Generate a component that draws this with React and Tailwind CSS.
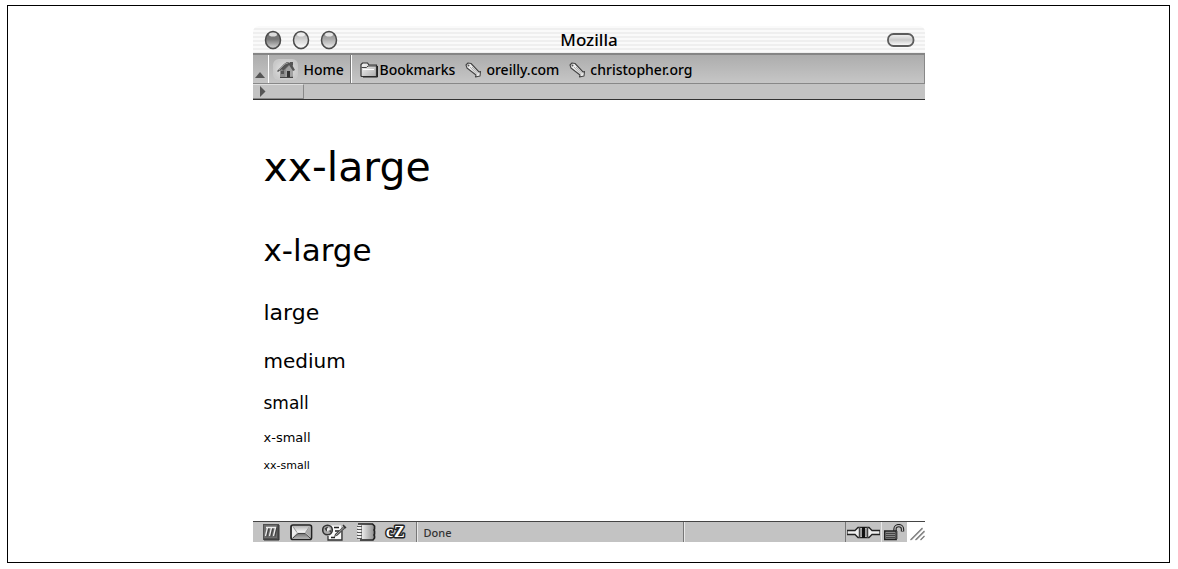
const samples = [
  { label: 'xx-large', style: 'text-[41px] leading-[48px]' },
  { label: 'x-large', style: 'text-[31px] leading-9' },
  { label: 'large', style: 'text-[22px] leading-7' },
  { label: 'medium', style: 'text-[20px] leading-6' },
  { label: 'small', style: 'text-[17px] leading-5' },
  { label: 'x-small', style: 'text-[13px] leading-4' },
  { label: 'xx-small', style: 'text-[11px] leading-[14px]' },
];

const windowButtons = [
  { label: 'Close', fill: 'url(#orbDark)' },
  { label: 'Minimize', fill: 'url(#orbLight)' },
  { label: 'Zoom', fill: 'url(#orbMid)' },
];

const HomeIcon = () => (
  <svg width="26" height="22" viewBox="0 0 26 22">
    <defs>
      <radialGradient id="homeGlow">
        <stop offset="0.5" stopColor="#d8d8d8" />
        <stop offset="1" stopColor="#c9c9c9" />
      </radialGradient>
    </defs>
    <rect x="0" y="0" width="25" height="21" rx="6" fill="url(#homeGlow)" />
    <path d="M7 10v8l5 1 8-1v-8l-5-5z" fill="#8a8a8a" />
    <path d="M13 10l4-4 3 5v6l-8 2z" fill="#a2a2a2" />
    <path d="M4 12l7-7 3-2 4 1 4 7-2 1-4-6-6 6-1-2-4 3z" fill="#555" />
    <path d="M6 11l6-6 3-1" stroke="#999" fill="none" />
    <path d="M17 3h3v4l-3-2z" fill="#555" />
    <path d="M14 12h3v6h-3z" fill="#333" />
    <path d="M8 12h3v3H8z" fill="#555" />
    <path d="M7 18.500h13" stroke="#444" />
  </svg>
);

const FolderIcon = () => (
  <svg width="19" height="16" viewBox="0 0 19 16">
    <defs>
      <linearGradient id="folder" x1="0" y1="0" x2="1" y2="1">
        <stop offset="0" stopColor="#fafafa" />
        <stop offset="1" stopColor="#a9a9a9" />
      </linearGradient>
    </defs>
    <path d="M1 14V2.500L2.500 1h5L9 3h7.500v11.500H1.500z" fill="url(#folder)" stroke="#333" strokeWidth="1.200" />
    <path d="M1.500 5.500h5l1.500-1.500h8" fill="none" stroke="#444" />
    <path d="M3 7.500h11" stroke="#fff" />
    <path d="M17.500 4v11H3" fill="none" stroke="#222" />
  </svg>
);

const TagIcon = () => (
  <svg width="17" height="16" viewBox="0 0 17 16">
    <path d="M1 3l2-2 3 .5 8 8.500 1.500-.5-.5 4.500-4.500 1 .5-2L2 6z" fill="#eee" stroke="#444" strokeWidth="1.100" strokeLinejoin="round" />
    <path d="M5 5l7 7.500M7 5l6 6.500" stroke="#aaa" fill="none" />
    <circle cx="3.500" cy="3.500" r="1" fill="#555" />
  </svg>
);

const NavigatorIcon = () => (
  <svg width="17" height="17" viewBox="0 0 17 17">
    <path d="M0 0h16v16H0z" fill="#505050" />
    <path d="M1 1h13v13H1z" fill="#6d6d6d" />
    <path d="M16 1v15H1" stroke="#333" fill="none" />
    <path d="M3.500 12.500L5.500 4M7.500 12.500L9.500 4M11.500 12.500L13.500 4" stroke="#444" strokeWidth="2" />
    <path d="M2.500 12L4.500 3.500M6.500 12L8.500 3.500M10.500 12L12.500 3.500M3 3.500h10" stroke="#eee" strokeWidth="1.300" fill="none" />
  </svg>
);

const MailIcon = () => (
  <svg width="23" height="17" viewBox="0 0 23 17">
    <defs>
      <linearGradient id="mailFlap" x1="0" y1="0" x2="0" y2="1">
        <stop offset="0" stopColor="#b5b5b5" />
        <stop offset="1" stopColor="#fafafa" />
      </linearGradient>
      <linearGradient id="mailBase" x1="0" y1="0" x2="0" y2="1">
        <stop offset="0" stopColor="#777" />
        <stop offset="1" stopColor="#b5b5b5" />
      </linearGradient>
    </defs>
    <rect x="1" y="1" width="20.500" height="14.500" rx="2" fill="#ccc" stroke="#222" strokeWidth="1.700" />
    <path d="M2 2.500l5 6-5 5z" fill="#eee" />
    <path d="M20.500 2.500l-5 6 5 5z" fill="#aaa" />
    <path d="M2.500 2h17.500l-5 6.500H7.500z" fill="url(#mailFlap)" />
    <path d="M2.500 14.500l5-4.500h7.500l5 4.500z" fill="url(#mailBase)" />
    <path d="M3 14l5-4.500h7l5 4.500" stroke="#444" fill="none" />
    <path d="M3 2.500l4 6M19.500 2.500l-4 6" stroke="#999" fill="none" />
  </svg>
);

const ComposerIcon = () => (
  <svg width="25" height="17" viewBox="0 0 25 17">
    <path d="M6 1.500h13v14H6z" fill="#fafafa" />
    <path d="M20 7v9H6v-4" fill="none" stroke="#333" strokeWidth="1.300" />
    <circle cx="5.500" cy="6" r="4.800" fill="#aaa" stroke="#333" strokeWidth="1.600" />
    <path d="M2.500 4.500l3-2 1 3-2 2zM7 7l2-1v3z" fill="#444" />
    <path d="M5 4.500l2-1 1 2-3 2z" fill="#eee" />
    <path d="M12 3.500h5M13 7h4M9 13.500h4" stroke="#222" strokeWidth="1.700" />
    <path d="M12 13l1-3 9-8 2 1.500-8.500 8z" fill="#444" />
    <path d="M13.500 11.500L22 3.500" stroke="#aaa" />
    <path d="M21 1l3 3" stroke="#333" strokeWidth="1.500" />
  </svg>
);

const AddressBookIcon = () => (
  <svg width="20" height="18" viewBox="0 0 20 18">
    <defs>
      <linearGradient id="book">
        <stop offset="0.2" stopColor="#f0f0f0" />
        <stop offset="1" stopColor="#929292" />
      </linearGradient>
    </defs>
    <path d="M1 1h14l2 2v12l-2 1.500H1z" fill="url(#book)" />
    <path d="M1 1h14.500l2 2v3l-.5 1 .5 1v3l-.5 1 .5 1v2L16 17H3" stroke="#222" fill="none" strokeWidth="1.700" />
    <path d="M4.500 2v14" stroke="#999" />
    <path d="M0 3.500h5M0 6.500h5M0 9.500h5M0 12.500h5M0 15.500h5" stroke="#555" />
    <path d="M0 4.500h4M0 7.500h4M0 10.500h4M0 13.500h4" stroke="#eee" />
  </svg>
);

const ChatIcon = () => (
  <svg width="26" height="20" viewBox="0 0 26 20" className="overflow-visible">
    <g fill="#fff" stroke="#222" strokeWidth="3" strokeLinejoin="round" paintOrder="stroke" fontFamily="Liberation Serif, serif" fontWeight="700">
      <text x="2" y="15" fontSize="16">c</text>
      <text x="10" y="15" fontSize="16">Z</text>
    </g>
  </svg>
);

const PlugIcon = () => (
  <svg width="33" height="13" viewBox="0 0 33 13">
    <path d="M0 4.500h8l3-3h11l3 3h8v4h-8l-3 3H11l-3-3H0z" fill="#eee" stroke="#222" strokeWidth="1.300" />
    <path d="M12 2h9v9h-9z" fill="#bbb" />
    <path d="M12.500 1v11M20.500 1v11" stroke="#444" strokeWidth="1.500" />
    <path d="M15 1h3v11h-3z" fill="#111" />
    <path d="M14 3v7M19 3v7" stroke="#888" />
  </svg>
);

const LockIcon = () => (
  <svg width="21" height="17" viewBox="0 0 21 17">
    <path d="M11 7V5c0-4.500 7.500-4.500 7.500 0v2.500" stroke="#222" strokeWidth="3.400" fill="none" />
    <path d="M11 7V5c0-4.500 7.500-4.500 7.500 0v2" stroke="#bbb" strokeWidth="1.200" fill="none" />
    <path d="M.7 7h11.500v8.500H.7z" fill="#888" stroke="#222" strokeWidth="1.400" />
    <path d="M2 9.500h9M2 11.500h9M2 13.500h9" stroke="#444" />
    <path d="M13 7v8" stroke="#555" />
  </svg>
);

const ResizeGrip = () => (
  <svg width="18" height="20" viewBox="0 0 18 20">
    <path d="M3.500 18L15.500 6M8.500 18l9-9M13.500 18l4-4" stroke="#777" strokeWidth="1.200" />
    <path d="M5 18L16 7M10 18l8-8" stroke="#ccc" strokeWidth=".8" />
  </svg>
);

const components = [
  { label: 'Navigator', icon: NavigatorIcon, style: 'w-[27px]' },
  { label: 'Mail', icon: MailIcon, style: 'w-8' },
  { label: 'Composer', icon: ComposerIcon, style: 'w-[35px]' },
  { label: 'Address Book', icon: AddressBookIcon, style: 'w-[27px]' },
  { label: 'Chat', icon: ChatIcon, style: 'w-8' },
];

const TitleBar = () => (
  <header className="grid grid-cols-[1fr_auto_1fr] items-center h-[29px] pl-[11px] pr-[10px] rounded-t-md border-b-2 border-[#858585] bg-[repeating-linear-gradient(to_bottom,#fafafa_0px,#fafafa_2px,#efefef_2px,#efefef_4px)]">
    <div className="flex gap-[10px]">
      {windowButtons.map(({ label, fill }) => (
        <button key={label} aria-label={label} className="block">
          <svg width="18" height="20" viewBox="0 0 18 20">
            <ellipse cx="9" cy="11" rx="8" ry="8.500" fill="#bbb" />
            <ellipse cx="9" cy="10" rx="7.500" ry="8.500" fill={fill} stroke="#4a4a4a" strokeWidth="1.500" />
            <ellipse cx="9" cy="4.500" rx="4" ry="2" fill="#fff" opacity=".75" />
          </svg>
        </button>
      ))}
    </div>
    <h1 className="text-[17px] leading-5">Mozilla</h1>
    <button aria-label="Toggle toolbar" className="justify-self-end">
      <svg width="28" height="14" viewBox="0 0 28 14">
        <defs>
          <linearGradient id="pill" x1="0" y1="0" x2="0" y2="1">
            <stop offset="0" stopColor="#f4f4f4" />
            <stop offset="0.5" stopColor="#ccc" />
            <stop offset="1" stopColor="#fff" />
          </linearGradient>
        </defs>
        <rect x="1" y="1" width="25.500" height="12" rx="5.500" fill="url(#pill)" stroke="#5c5c5c" strokeWidth="1.800" />
      </svg>
    </button>
  </header>
);

const Toolbar = () => (
  <nav className="flex h-[29px] text-[14px] leading-5 border-b border-r border-[#888] bg-linear-to-b from-[#adadad] to-[#c6c6c6]">
    <button aria-label="Collapse toolbar" className="flex items-end justify-center w-4 pb-1 border-r border-white">
      <svg width="11" height="7" viewBox="0 0 11 7">
        <path d="M0 6l5-6 5 6z" fill="#555" />
      </svg>
    </button>
    <a href="#home" className="flex items-center w-[82px] pl-1 pt-[2px] gap-[5px] border-r border-[#777]">
      <HomeIcon />
      Home
    </a>
    <div className="flex items-center gap-[10px] pl-2 pt-[2px] border-l border-white whitespace-nowrap">
      <button className="flex items-center gap-px">
        <FolderIcon />
        Bookmarks
      </button>
      <a href="#oreilly" className="flex items-center gap-1">
        <TagIcon />
        oreilly.com
      </a>
      <a href="#christopher" className="flex items-center gap-1">
        <TagIcon />
        christopher.org
      </a>
    </div>
  </nav>
);

const StatusBar = () => (
  <footer className="flex h-[21px] border-t border-[#444] bg-[#c3c3c3]">
    <div className="flex items-center pl-[10px] border-r border-[#777]">
      {components.map(({ label, icon: Icon, style }) => (
        <button key={label} aria-label={label} className={`${style} shrink-0`}>
          <Icon />
        </button>
      ))}
    </div>
    <p className="flex-1 flex items-center pl-[6px] pt-[2px] border-l border-[#e8e8e8] text-[11px] leading-4 text-[#333]">Done</p>
    <div className="flex items-center w-[242px] border-l border-[#777]">
      <div className="flex-1 h-full border-l border-[#e8e8e8]" />
      <div className="flex items-center h-full w-9 pl-px border-l border-[#777]">
        <PlugIcon />
      </div>
      <div className="flex items-center justify-center h-full w-[26px] border-l border-[#e8e8e8]">
        <LockIcon />
      </div>
      <div className="h-full w-[18px] bg-white">
        <ResizeGrip />
      </div>
    </div>
  </footer>
);

const App = () => {
  return (
    <div className="pt-[5px] pl-[7px] pr-2 bg-white text-black">
      <svg width="0" height="0" className="absolute">
        <defs>
          <linearGradient id="orbDark" x1="0" y1="0" x2="0" y2="1">
            <stop offset="0" stopColor="#777" />
            <stop offset="0.45" stopColor="#777" />
            <stop offset="1" stopColor="#d6d6d6" />
          </linearGradient>
          <linearGradient id="orbLight" x1="0" y1="0" x2="0" y2="1">
            <stop offset="0" stopColor="#aaa" />
            <stop offset="0.45" stopColor="#d0d0d0" />
            <stop offset="1" stopColor="#fff" />
          </linearGradient>
          <linearGradient id="orbMid" x1="0" y1="0" x2="0" y2="1">
            <stop offset="0" stopColor="#888" />
            <stop offset="0.45" stopColor="#aaa" />
            <stop offset="1" stopColor="#f0f0f0" />
          </linearGradient>
        </defs>
      </svg>
      <div className="border border-black py-5">
        <div className="w-full max-w-[672px] mx-auto font-['Noto_Sans',sans-serif] font-medium">
          <TitleBar />
          <Toolbar />
          <div className="h-4 border-b border-[#333] bg-[#c3c3c3]">
            <button aria-label="Expand toolbar" className="flex items-center w-[51px] h-[15px] pl-[7px] border-t border-r border-b border-[#888] border-t-[#e0e0e0]">
              <svg width="6" height="11" viewBox="0 0 6 11">
                <path d="M0 0l5.500 5.500L0 11z" fill="#555" />
              </svg>
            </button>
          </div>
          <main className="pt-[43px] pb-[37px] pl-[11px] font-['DejaVu_Sans',sans-serif] font-normal">
            {samples.map(({ label, style }) => (
              <p key={label} className={`${style} mb-[1em]`}>{label}</p>
            ))}
          </main>
          <StatusBar />
        </div>
      </div>
    </div>
  );
};

export default App;
